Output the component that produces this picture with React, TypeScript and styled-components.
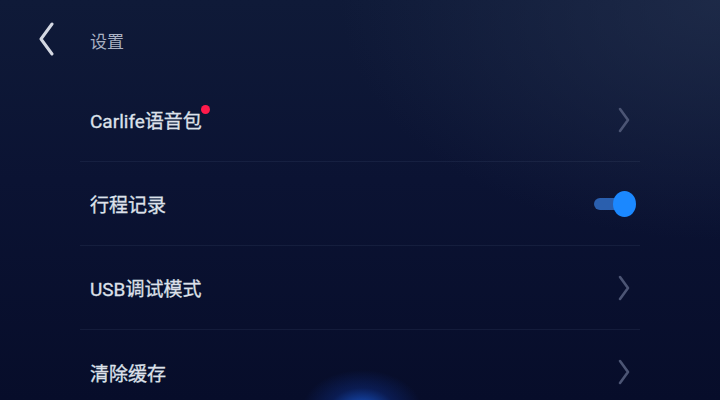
import React from 'react'
import styled, { createGlobalStyle } from 'styled-components'

const GlobalStyle = createGlobalStyle`
  html, body {
    margin: 0;
    padding: 0;
    background: #0b1230;
  }
  * {
    box-sizing: border-box;
  }
`

const SettingsWrap = styled.div`
  position: relative;
  width: 720px;
  height: 400px;
  overflow: hidden;
  font-family: Roboto, 'Noto Sans CJK SC', sans-serif;
  background:
    radial-gradient(ellipse 60px 40px at 362px 410px, rgba(30, 110, 255, 0.75), rgba(20, 70, 200, 0.25) 55%, rgba(10, 20, 60, 0) 100%),
    radial-gradient(ellipse 380px 240px at 720px 0px, rgba(35, 48, 78, 0.7), rgba(20, 30, 60, 0) 100%),
    linear-gradient(180deg, #0f1a38 0%, #0b1333 45%, #070d2a 100%);
`

const Header = styled.div`
  display: flex;
  align-items: center;
  height: 78px;
  padding-left: 35px;
`

const BackButton = styled.div`
  width: 22px;
  height: 34px;
  display: flex;
  align-items: center;
  justify-content: center;
`

const Title = styled.span`
  margin-left: 33px;
  margin-top: 2px;
  font-size: 17px;
  color: #a9b0c2;
`

const List = styled.div`
  margin-left: 80px;
  width: 560px;
  display: flex;
  flex-direction: column;
`

const Item = styled.div<{ $last?: boolean }>`
  height: 84px;
  display: flex;
  align-items: center;
  justify-content: space-between;
  padding: 0 6px 0 10px;
  border-bottom: ${(p) => (p.$last ? 'none' : '1px solid rgba(120, 135, 170, 0.11)')};
`

const Label = styled.span`
  position: relative;
  font-size: 19px;
  color: #dde1ea;
  -webkit-text-stroke: 0.3px #dde1ea;
`

const RedDot = styled.span`
  position: absolute;
  right: -8px;
  top: -1px;
  width: 9px;
  height: 9px;
  border-radius: 50%;
  background: #ff1a4b;
`

const Arrow = styled.div`
  width: 20px;
  height: 30px;
  display: flex;
  align-items: center;
  justify-content: center;
`

const Switch = styled.div`
  position: relative;
  width: 42px;
  height: 26px;
  margin-right: -2px;
`

const Track = styled.div`
  position: absolute;
  left: 0;
  top: 7px;
  width: 30px;
  height: 12px;
  border-radius: 6px;
  background: #2a5fae;
`

const Knob = styled.div`
  position: absolute;
  right: 0;
  top: 0;
  width: 23px;
  height: 26px;
  border-radius: 50%;
  background: #1b88ff;
`

const ChevronRight = () => (
  <svg width="14" height="26" viewBox="0 0 14 26">
    <path d="M3 2 L11 13 L3 24" fill="none" stroke="#4c5574" strokeWidth="2.6" strokeLinecap="round" strokeLinejoin="round" />
  </svg>
)

const ChevronLeft = () => (
  <svg width="18" height="34" viewBox="0 0 18 34">
    <path d="M15 2 L4 17 L15 32" fill="none" stroke="#d4d8e2" strokeWidth="3" strokeLinecap="round" strokeLinejoin="round" />
  </svg>
)

interface SettingItem {
  label: string
  dot?: boolean
  toggle?: boolean
}

const items: SettingItem[] = [
  { label: 'Carlife语音包', dot: true },
  { label: '行程记录', toggle: true },
  { label: 'USB调试模式' },
  { label: '清除缓存' },
]

const App: React.FunctionComponent = () => {
  return (
    <>
      <GlobalStyle />
      <SettingsWrap>
        <Header>
          <BackButton>
            <ChevronLeft />
          </BackButton>
          <Title>设置</Title>
        </Header>
        <List>
          {items.map((item, i) => (
            <Item key={item.label} $last={i === items.length - 1}>
              <Label>
                {item.label}
                {item.dot ? <RedDot /> : null}
              </Label>
              {item.toggle ? (
                <Switch>
                  <Track />
                  <Knob />
                </Switch>
              ) : (
                <Arrow>
                  <ChevronRight />
                </Arrow>
              )}
            </Item>
          ))}
        </List>
      </SettingsWrap>
    </>
  )
}

export default App
